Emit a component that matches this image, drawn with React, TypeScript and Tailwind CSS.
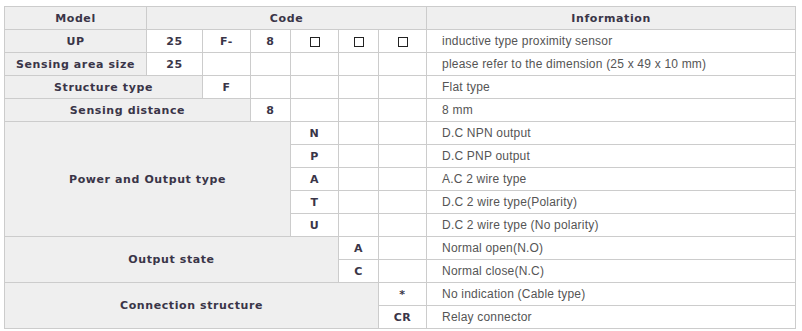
import React from "react";

const B = "border border-[#cccccc]";
const G = `${B} bg-[#efefef] text-center font-bold text-[#3a3548] tracking-[0.6px]`;
const W = `${B} bg-white text-center font-bold text-[#3a3548] tracking-[0.6px]`;
const I = `${B} bg-white text-left pl-[15px] font-normal text-[#555555] tracking-[0.2px] text-[12px] [font-family:'Liberation_Sans',sans-serif]`;

const Box = () => (
  <span className="inline-block w-[10px] h-[10px] border-[1.5px] border-[#222] align-middle" />
);

export default function App() {
  return (
    <div className="bg-white w-[802px] h-[331px] pt-[6px] pl-[4px] [font-family:'DejaVu_Sans',sans-serif]">
      <table className="border-collapse table-fixed w-[791px] text-[11px] leading-none">
        <colgroup>
          <col className="w-[142px]" />
          <col className="w-[56px]" />
          <col className="w-[48px]" />
          <col className="w-[40px]" />
          <col className="w-[48px]" />
          <col className="w-[40px]" />
          <col className="w-[48px]" />
          <col className="w-[369px]" />
        </colgroup>
        <tbody>
          <tr className="h-[23px]">
            <td className={G}>Model</td>
            <td className={G} colSpan={6}>Code</td>
            <td className={G}>Information</td>
          </tr>
          <tr className="h-[23px]">
            <td className={G}>UP</td>
            <td className={W}>25</td>
            <td className={W}>F-</td>
            <td className={W}>8</td>
            <td className={W}><Box /></td>
            <td className={W}><Box /></td>
            <td className={W}><Box /></td>
            <td className={I}>inductive type proximity sensor</td>
          </tr>
          <tr className="h-[23px]">
            <td className={G}>Sensing area size</td>
            <td className={W}>25</td>
            <td className={W}></td>
            <td className={W}></td>
            <td className={W}></td>
            <td className={W}></td>
            <td className={W}></td>
            <td className={I}>please refer to the dimension (25 x 49 x 10 mm)</td>
          </tr>
          <tr className="h-[23px]">
            <td className={G} colSpan={2}>Structure type</td>
            <td className={W}>F</td>
            <td className={W}></td>
            <td className={W}></td>
            <td className={W}></td>
            <td className={W}></td>
            <td className={I}>Flat type</td>
          </tr>
          <tr className="h-[23px]">
            <td className={G} colSpan={3}>Sensing distance</td>
            <td className={W}>8</td>
            <td className={W}></td>
            <td className={W}></td>
            <td className={W}></td>
            <td className={I}>8 mm</td>
          </tr>
          {[
            ["N", "D.C NPN output"],
            ["P", "D.C PNP output"],
            ["A", "A.C 2 wire type"],
            ["T", "D.C 2 wire type(Polarity)"],
            ["U", "D.C 2 wire type (No polarity)"],
          ].map(([c, t], i) => (
            <tr className="h-[23px]" key={c}>
              {i === 0 && (
                <td className={G} colSpan={4} rowSpan={5}>Power and Output type</td>
              )}
              <td className={W}>{c}</td>
              <td className={W}></td>
              <td className={W}></td>
              <td className={I}>{t}</td>
            </tr>
          ))}
          {[
            ["A", "Normal open(N.O)"],
            ["C", "Normal close(N.C)"],
          ].map(([c, t], i) => (
            <tr className="h-[23px]" key={"o" + c}>
              {i === 0 && (
                <td className={G} colSpan={5} rowSpan={2}>Output state</td>
              )}
              <td className={W}>{c}</td>
              <td className={W}></td>
              <td className={I}>{t}</td>
            </tr>
          ))}
          {[
            ["*", "No indication (Cable type)"],
            ["CR", "Relay connector"],
          ].map(([c, t], i) => (
            <tr className="h-[23px]" key={"c" + c}>
              {i === 0 && (
                <td className={G} colSpan={6} rowSpan={2}>Connection structure</td>
              )}
              <td className={W}>{c}</td>
              <td className={I}>{t}</td>
            </tr>
          ))}
        </tbody>
      </table>
    </div>
  );
}
